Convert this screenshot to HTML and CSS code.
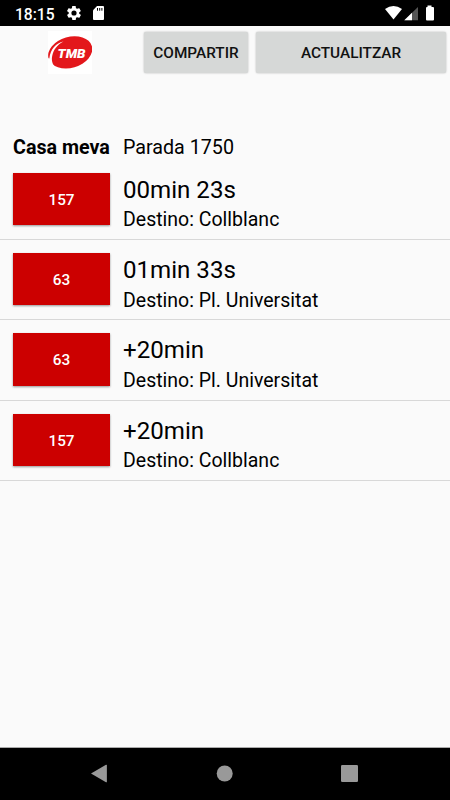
FILE: index.html
```html
<!DOCTYPE html>
<html lang="ca">
<head>
  <meta charset="utf-8">
  <title>TMB - Parada 1750</title>
  <link rel="stylesheet" href="styles.css">
</head>
<body>
  <div class="status-bar">
    <span class="clock">18:15</span>
    <svg class="gear" width="14" height="14" viewBox="2 2 20 20"><path fill="#fff" d="M19.4 13c0-.3.1-.6.1-1s0-.7-.1-1l2.1-1.600c.2-.2.2-.4.1-.6l-2-3.500c-.1-.2-.4-.3-.6-.2l-2.500 1c-.5-.4-1.100-.7-1.700-1l-.4-2.600c0-.3-.2-.5-.5-.5h-4c-.3 0-.5.2-.5.5L9 5.100c-.6.3-1.200.6-1.700 1l-2.500-1c-.2-.1-.5 0-.6.200l-2 3.500c-.1.200-.1.500.1.600L4.500 11c0 .3-.1.6-.1 1s0 .7.100 1l-2.100 1.600c-.2.200-.2.400-.1.600l2 3.500c.1.200.4.300.6.200l2.500-1c.5.400 1.100.7 1.700 1l.4 2.600c0 .3.200.5.500.5h4c.3 0 .5-.2.500-.5l.4-2.600c.6-.3 1.200-.6 1.700-1l2.500 1c.2.100.5 0 .6-.200l2-3.500c.1-.2.1-.5-.1-.6zM12 15.700a3.700 3.700 0 1 1 0-7.400 3.700 3.700 0 0 1 0 7.400z"/></svg>
    <svg class="sd-card" width="11" height="14" viewBox="0 0 11 14"><path fill="#fff" d="M4 0h6q1 0 1 1v12q0 1-1 1H1q-1 0-1-1V4.200z"/><path stroke="#000" stroke-width="1" d="M4.500 2v2.700M6.700 2v2.700M8.900 2v2.700"/></svg>
    <svg class="signals" width="50" height="16" viewBox="0 0 50 16"><path fill="#fff" d="M0 4Q8.500-2.100 17 4L8.500 14.500z"/><path fill="#555" d="M33 2V15.200H19.300z"/><path fill="#fff" d="M27 7.800v7.400h-7.700z"/><path fill="#fff" d="M42.500.5h4V2H48q1 0 1 1v11.500q0 1-1 1h-6q-1 0-1-1V3q0-1 1-1h.5z"/></svg>
  </div>

  <div class="toolbar">
    <svg class="logo" width="44" height="43" viewBox="0 0 44 43">
      <rect width="44" height="43" fill="#fff"/>
      <ellipse cx="22.200" cy="21.300" rx="22.500" ry="15.500" transform="rotate(-16 22.200 21.300)" fill="#e3171b"/>
      <path fill="#fff" d="M15.500 10.500C8 12 2.500 18 1.300 27.500L-1 27V40H12C5 36 3 31 4.200 25C5.500 18.500 9 14 15.500 10.500z"/>
      <text class="logo-text" x="9.500" y="26.500" textLength="28" lengthAdjust="spacingAndGlyphs">TMB</text>
    </svg>
    <button class="share">COMPARTIR</button>
    <button class="refresh">ACTUALITZAR</button>
  </div>

  <div class="stop">
    <span class="stop-name">Casa meva</span>
    <span>Parada 1750</span>
  </div>

  <div class="arrivals">
    <div class="arrival">
      <div class="line">157</div>
      <div class="info">
        <div class="time">00min 23s</div>
        <div class="destination">Destino: Collblanc</div>
      </div>
    </div>
    <div class="arrival">
      <div class="line">63</div>
      <div class="info">
        <div class="time">01min 33s</div>
        <div class="destination">Destino: Pl. Universitat</div>
      </div>
    </div>
    <div class="arrival">
      <div class="line">63</div>
      <div class="info">
        <div class="time">+20min</div>
        <div class="destination">Destino: Pl. Universitat</div>
      </div>
    </div>
    <div class="arrival">
      <div class="line">157</div>
      <div class="info">
        <div class="time">+20min</div>
        <div class="destination">Destino: Collblanc</div>
      </div>
    </div>
  </div>

  <div class="nav-bar">
    <svg width="18" height="20" viewBox="0 0 18 20"><path fill="#999" d="M1 9.500L16 .8q.9-.3.900.5v16.400q0 .8-.9.500z"/></svg>
    <svg width="18" height="20" viewBox="0 0 18 20"><circle cx="9.700" cy="9.500" r="8" fill="#999"/></svg>
    <svg width="18" height="20" viewBox="0 0 18 20"><rect x="1" y="1" width="17" height="17" rx="1.300" fill="#999"/></svg>
  </div>
</body>
</html>
```
FILE: styles.css
```css
* {
  box-sizing: border-box;
}

body {
  font-family: Roboto, sans-serif;
  background-color: #fafafa;
  color: #000;
  margin: 0;
  height: 100vh;
  display: flex;
  flex-direction: column;
  overflow: hidden;
}

.status-bar {
  background-color: #000;
  color: white;
  height: 26px;
  flex: none;
  display: flex;
  align-items: center;
  padding: 0 15px;
}

.clock {
  font-size: 15.6px;
  font-weight: 500;
  width: 52px;
  padding-top: 3px;
}

.sd-card {
  margin-left: 12px;
}

.signals {
  margin-left: auto;
}

/* Logo and the two action buttons */
.toolbar {
  display: flex;
  align-items: flex-start;
  height: 108px;
  padding: 5px 4px 0 48px;
}

.logo-text {
  font-family: Roboto, sans-serif;
  font-size: 12.5px;
  font-weight: 900;
  font-style: italic;
  fill: white;
}

.toolbar button {
  font-family: inherit;
  font-size: 15.35px;
  font-weight: 500;
  height: 41px;
  padding: 1px 0 0;
  border: none;
  border-radius: 2px;
  background-color: #d6d8d7;
  color: #111;
  box-shadow: 0 0 2px rgba(0, 0, 0, 0.3);
  margin-top: 1px;
}

.toolbar .share {
  width: 104px;
  margin-left: 52px;
}

.toolbar .refresh {
  flex: 1;
  margin-left: 8px;
}

.stop {
  display: flex;
  font-size: 19.7px;
  line-height: 28px;
  height: 25.6px;
  padding-left: 13px;
}

.stop-name {
  font-weight: 700;
  width: 110px;
}

.arrival {
  display: flex;
  height: 80.4px;
  padding: 13px 13px 0;
  border-bottom: 1px solid #d8d8d8;
}

.line {
  width: 97px;
  height: 52.4px;
  line-height: 54px;
  background-color: #cc0000;
  color: white;
  font-size: 15.35px;
  font-weight: 500;
  text-align: center;
  box-shadow: 0 1px 2px rgba(0, 0, 0, 0.4);
}

.info {
  margin-left: 13px;
}

.time {
  font-size: 24.1px;
  line-height: 35.6px;
}

.destination {
  font-size: 19.5px;
  line-height: 24px;
}

.nav-bar {
  background-color: #000;
  height: 53px;
  margin-top: auto;
  border-top: 1px solid #aaa;
  display: flex;
  align-items: center;
  justify-content: space-between;
  padding: 0 92px 0 90px;
}
```
